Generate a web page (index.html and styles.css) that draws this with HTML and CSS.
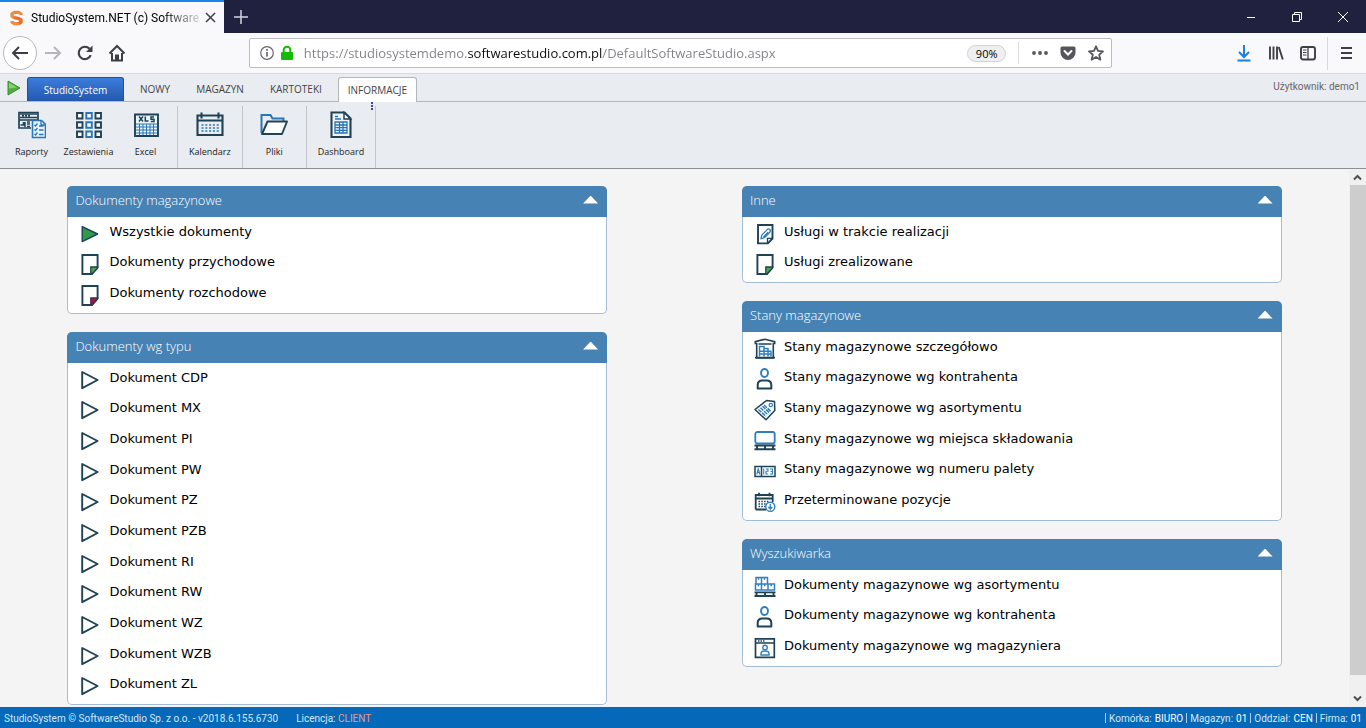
FILE: index.html
```
<!DOCTYPE html>
<html lang="pl">
<head>
<meta charset="utf-8">
<meta name="viewport" content="width=device-width, initial-scale=1">
<title>StudioSystem.NET (c) SoftwareStudio</title>
<link rel="stylesheet" href="styles.css">
</head>
<body>
<svg class="sprite" aria-hidden="true">
  <symbol id="i-play" viewBox="0 0 22 22"><path d="M3.2 3v16.2L18.6 11z" fill="#fff" stroke="#1f4257" stroke-width="1.9" stroke-linejoin="round"/></symbol>
  <symbol id="i-play-green" viewBox="0 0 22 22"><path d="M3.2 3.6v15L18.6 11z" fill="#2f9a4c" stroke="#1f4257" stroke-width="1.4" stroke-linejoin="round"/></symbol>
  <symbol id="i-doc-green" viewBox="0 0 22 22"><path d="M3.4 2h15.200v12.500l-5.700 6.500h-9.500z" fill="#fff" stroke="#1f4257" stroke-width="1.9"/><path d="M11.800 21v-7h6.800v1l-5.700 6z" fill="#4ca44f" stroke="#1f4257" stroke-width="1.300"/></symbol>
  <symbol id="i-doc-red" viewBox="0 0 22 22"><path d="M3.400 2h15.200v12.500l-5.700 6.500h-9.500z" fill="#fff" stroke="#1f4257" stroke-width="1.900"/><path d="M11.800 21v-7h6.800v1l-5.700 6z" fill="#a5183f" stroke="#3c2f4b" stroke-width="1.300"/></symbol>
  <symbol id="i-doc-edit" viewBox="0 0 22 22"><path d="M4 2h14.500v13.500l-4.600 4.900H4z" fill="#fff" stroke="#1f4257" stroke-width="1.900"/><path d="M13.500 20v-4.700h4.600" fill="none" stroke="#1f4257" stroke-width="1.300"/><path d="M7 15.600l.8-3.600 5.600-5.600q1.300-1 2.400.1t.2 2.500L10.500 14.700z M9.500 14l4.600-4.700" fill="none" stroke="#2f7fc0" stroke-width="1.300"/></symbol>
  <symbol id="i-warehouse" viewBox="0 0 22 22"><path d="M2.700 20V5.500H1.300V3.600L11 1.200l9.700 2.400v1.900h-1.400V20zM4.500 6h13" fill="none" stroke="#1f4257" stroke-width="1.600"/><path d="M5.500 18.500v-10H10v10M5.500 13.300h12M10 10.600h4v8M17 13.300v5.200M5.500 16h12" fill="none" stroke="#2f7fc0" stroke-width="1.500"/><path d="M1 19.600h20" stroke="#1f4257" stroke-width="1.700"/></symbol>
  <symbol id="i-person" viewBox="0 0 22 22"><ellipse cx="10.500" cy="5" rx="3.500" ry="4" fill="none" stroke="#2f7fc0" stroke-width="1.900"/><path d="M3.700 20.500v-3.500q0-4.500 4.500-4.500h4.600q4.500 0 4.500 4.500v3.500z" fill="none" stroke="#1f4257" stroke-width="2" stroke-linejoin="round"/></symbol>
  <symbol id="i-tag" viewBox="0 0 22 22"><path d="M1 10.500L12.500 1.500 20.500 2.500 20.800 11.500 12 20.800z" fill="#fff" stroke="#1f4257" stroke-width="1.500" stroke-linejoin="round"/><circle cx="16.800" cy="6" r="1.700" fill="none" stroke="#2f7fc0" stroke-width="1.200"/><path d="M4.500 10.500l7.500 7M6.500 8.800l7.500 7M8.500 7.200l7.500 7M10 6l7 6.500" stroke="#2f7fc0" stroke-width="1.500" stroke-dasharray="4 1"/></symbol>
  <symbol id="i-pallet" viewBox="0 0 22 22"><rect x="1.300" y="2" width="19.400" height="11.500" rx="2" fill="none" stroke="#2f7fc0" stroke-width="1.800"/><path d="M.5 15.500h21M.5 19.300h21M3 15v5M11 15v5M19 15v5" stroke="#1f4257" stroke-width="1.900"/></symbol>
  <symbol id="i-number" viewBox="0 0 22 22"><path d="M1 6.500h20v10H1zM7.500 6.500v10" fill="none" stroke="#1f4257" stroke-width="1.500"/><path d="M2.800 14.500l1.500-6 1.500 6M3 12.500h2.500M9.700 8.500v6M11.700 9h2.300v2.300H12V14h2.300M16 9h2.500v5H16M16.500 11.500h2" fill="none" stroke="#2f7fc0" stroke-width="1.100"/></symbol>
  <symbol id="i-calendar-down" viewBox="0 0 22 22"><path d="M1.700 18.500V4h17v7M1.700 7.500h17M1.700 18.500H12M5 1.800v3.500M15.500 1.800v3.500" fill="none" stroke="#1f4257" stroke-width="1.800"/><path d="M4.500 10.500h11M4.500 13h8M4.500 15.500h7" stroke="#1f4257" stroke-width="1.400" stroke-dasharray="1.500 1.300"/><circle cx="16.300" cy="15.800" r="4.500" fill="#fff" stroke="#2f7fc0" stroke-width="1.400"/><path d="M16.300 13v5M14.300 16l2 2 2-2" fill="none" stroke="#2f7fc0" stroke-width="1.300"/></symbol>
  <symbol id="i-boxes" viewBox="0 0 22 22"><path d="M1.500 14V8h6v6zM7.500 14V8h6.500v6zM14 14V8h6.500v6zM2 8V1.500h5.500V8M7.500 8V1.500h6V8M4.500 1.500v2.300M10.500 1.500v2.300M4.500 8v2.300M10.700 8v2.300M17.200 8v2.300" fill="none" stroke="#2f7fc0" stroke-width="1.500"/><path d="M.5 16.400h21M.5 20h21M2.500 16v4.500M11 16v4.500M19.500 16v4.500" stroke="#1f4257" stroke-width="1.900"/></symbol>
  <symbol id="i-window-person" viewBox="0 0 22 22"><path d="M1.500 1.800h18.800v18.500H1.500zM1.500 6h18.800" fill="none" stroke="#1f4257" stroke-width="1.700"/><path d="M4 4h7" stroke="#1f4257" stroke-width="1.300" stroke-dasharray="1.500 1"/><circle cx="11" cy="10.500" r="2.300" fill="none" stroke="#2f7fc0" stroke-width="1.400"/><path d="M7 18v-1.500q0-2.500 4-2.500t4 2.500V18z" fill="none" stroke="#2f7fc0" stroke-width="1.400"/></symbol>
</svg>

<header class="titlebar">
  <div class="tab">
    <svg class="favicon" viewBox="0 0 13 16" aria-hidden="true"><path d="M11 5V3.800L8.700 2.300H4.300L2 3.800v2.500L4.300 7.600l4.400.9L11 9.800v2.400l-2.300 1.500H4.300L2 12.200V11" fill="none" stroke="#f18a3c" stroke-width="3.200" stroke-linejoin="round"/><path d="M4.300 7.600l4.400.9L11 9.800v2.400l-2.300 1.500" fill="none" stroke="#ea6a30" stroke-width="2.800"/></svg>
    <span class="tab-title">StudioSystem.NET (c) Software</span>
    <button class="tab-close" aria-label="Zamknij kartę"><svg width="11" height="11" viewBox="0 0 11 11"><path d="M1 1l9 9M10 1L1 10" stroke="#3e3e46" stroke-width="1.500"/></svg></button>
  </div>
  <button class="new-tab" aria-label="Nowa karta"><svg width="14" height="14" viewBox="0 0 14 14"><path d="M7 0v14M0 7h14" stroke="#d5d5df" stroke-width="1.500"/></svg></button>
  <div class="window-buttons">
    <button aria-label="Minimalizuj"><svg width="10" height="10" viewBox="0 0 10 10"><path d="M1 5.500h8" stroke="#fff"/></svg></button>
    <button aria-label="Przywróć"><svg width="10" height="10" viewBox="0 0 10 10"><path d="M.5 2.500h7v7h-7zM2.500 2.500v-2h7v7h-2" fill="none" stroke="#fff"/></svg></button>
    <button aria-label="Zamknij"><svg width="10" height="10" viewBox="0 0 10 10"><path d="M0 0l10 10M10 0L0 10" stroke="#fff"/></svg></button>
  </div>
</header>

<nav class="navbar" aria-label="Przeglądarka">
  <button class="nav-button back" aria-label="Wstecz"><svg width="18" height="18" viewBox="0 0 18 18"><path d="M17 9H2M8 3L2 9l6 6" fill="none" stroke="#3e3e46" stroke-width="2"/></svg></button>
  <button class="nav-button" aria-label="Dalej"><svg width="18" height="18" viewBox="0 0 18 18"><path d="M1 9h15M10 3l6 6-6 6" fill="none" stroke="#b5b5ba" stroke-width="2"/></svg></button>
  <button class="nav-button" aria-label="Odśwież"><svg width="18" height="18" viewBox="0 0 18 18"><path d="M14.700 11.200A6.200 6.200 0 1 1 13.500 4.800" fill="none" stroke="#3e3e46" stroke-width="2.200"/><path d="M16.500 1.500V8H10z" fill="#3e3e46"/></svg></button>
  <button class="nav-button" aria-label="Strona startowa"><svg width="18" height="18" viewBox="0 0 18 18"><path d="M1.500 9.500L9 2l7.500 7.500M4 9v7.500h10V9" fill="none" stroke="#3e3e46" stroke-width="2"/><path d="M7 16v-5.500h4V16z" fill="#3e3e46"/></svg></button>
  <span class="nav-space"></span>
  <div class="urlbar">
    <svg width="16" height="16" viewBox="0 0 16 16" aria-hidden="true"><circle cx="8" cy="8" r="6.300" fill="none" stroke="#66666c" stroke-width="1.200"/><path d="M8 7v4.500M8 4v1.700" stroke="#66666c" stroke-width="1.700"/></svg>
    <svg width="16" height="16" viewBox="0 0 16 16" aria-hidden="true"><rect x="2" y="7" width="12" height="8" rx="1" fill="#12bc00"/><path d="M4.700 8V5a3.300 3.300 0 0 1 6.600 0v3" fill="none" stroke="#12bc00" stroke-width="2"/></svg>
    <input class="url" type="text" aria-label="Adres" value="https://studiosystemdemo.softwarestudio.com.pl/DefaultSoftwareStudio.aspx">
    <button class="zoom">90%</button>
    <span class="url-divider"></span>
    <button class="url-button" aria-label="Więcej"><svg width="16" height="16" viewBox="0 0 16 16" fill="#55555c"><circle cx="2" cy="8" r="1.900"/><circle cx="8" cy="8" r="1.900"/><circle cx="14" cy="8" r="1.900"/></svg></button>
    <button class="url-button" aria-label="Pocket"><svg width="16" height="16" viewBox="0 0 16 16"><path d="M2 1.500h12q1.500 0 1.500 1.500v4.500a7.500 7.500 0 0 1-15 0V3Q.5 1.500 2 1.500z" fill="#55555c"/><path d="M4.500 6L8 9.500 11.500 6" fill="none" stroke="#fff" stroke-width="2" stroke-linecap="round"/></svg></button>
    <button class="url-button" aria-label="Zakładka"><svg width="16" height="16" viewBox="0 0 16 16"><path d="M8 1.300l2 4.600 5 .5-3.800 3.300 1.200 5L8 12l-4.400 2.700 1.200-5L1 6.400l5-.5z" fill="none" stroke="#55555c" stroke-width="1.800" stroke-linejoin="round"/></svg></button>
  </div>
  <span class="nav-space"></span>
  <button class="nav-button" aria-label="Pobrane"><svg width="16" height="18" viewBox="0 0 16 18"><path d="M8 1v12M3 8l5 5 5-5M1.500 16.500h13" fill="none" stroke="#1a7fe0" stroke-width="2"/></svg></button>
  <button class="nav-button" aria-label="Biblioteka"><svg width="16" height="16" viewBox="0 0 16 16"><path d="M2 1.500v13M5.500 1.500v13M9 1.500v13M10.800 2l4 12.500" stroke="#3e3e46" stroke-width="1.900"/></svg></button>
  <button class="nav-button" aria-label="Panel boczny"><svg width="16" height="16" viewBox="0 0 16 16"><rect x="1" y="2" width="14" height="12.500" rx="2" fill="none" stroke="#3e3e46" stroke-width="1.900"/><path d="M8 2v12.500" stroke="#3e3e46" stroke-width="1.300"/><path d="M3 5h3.500M3 7.500h3.500M3 10h3.500" stroke="#3e3e46"/></svg></button>
  <span class="menu-divider"></span>
  <button class="nav-button menu" aria-label="Menu"><svg width="14" height="14" viewBox="0 0 14 14"><path d="M1 2h11M1 7h11M1 12h11" stroke="#3e3e46" stroke-width="2"/></svg></button>
</nav>

<div class="ribbon-tabs">
  <svg class="start" width="14" height="16" viewBox="0 0 14 16" aria-hidden="true"><path d="M1 1v14L13 8z" fill="#4fae3e" stroke="#3d8f35" stroke-linejoin="round"/><path d="M2 2.500v6l8-1z" fill="#86d070"/></svg>
  <button class="ribbon-tab primary">StudioSystem</button>
  <button class="ribbon-tab">NOWY</button>
  <button class="ribbon-tab">MAGAZYN</button>
  <button class="ribbon-tab">KARTOTEKI</button>
  <button class="ribbon-tab active">INFORMACJE</button>
  <span class="user">Użytkownik: demo1</span>
</div>

<div class="ribbon">
  <div class="group">
    <button class="tool"><svg viewBox="0 0 28 28"><path d="M1 1.500h19V9H1zM1 9v8h12M20 9v1" fill="none" stroke="#1f4257" stroke-width="1.700"/><path d="M2 3h17M2 6.500h17" stroke="#1f4257" stroke-width="1.500"/><path d="M4 4.800h8" stroke="#1f4257" stroke-width="2" stroke-dasharray="2 1"/><path d="M2.500 14h3v-3M7 11v5M9 11h3M9 13h3M9 15.500h3" fill="none" stroke="#1f4257" stroke-width="1.500"/><path d="M14.500 9.500h9l4 4v13h-13z" fill="#e9f1fb" stroke="#2876b8" stroke-width="1.600"/><path d="M23 9.500v4.500h4.500M16.500 14l1 1 2-2.500M16.500 18.500l1 1 2-2.500M16.500 23l1 1 2-2.500M21 15h4.500M21 19h4.500M21 23.500h4.500" fill="none" stroke="#2876b8" stroke-width="1.300"/></svg>Raporty</button>
    <button class="tool"><svg viewBox="0 0 28 28" fill="#fff" stroke-width="1.900"><g stroke="#1f4257"><path d="M2 2h5.500v5.500H2zM2 11.300h5.500v5.500H2zM2 20.500h5.500V26H2zM20.500 2H26v5.500h-5.500zM20.500 11.300H26v5.500h-5.500zM20.500 20.500H26V26h-5.500z"/></g><g stroke="#2876b8"><path d="M11.300 2h5.500v5.500h-5.500zM11.300 11.300h5.500v5.500h-5.500zM11.300 20.500h5.500V26h-5.500z"/></g></svg>Zestawienia</button>
    <button class="tool"><svg viewBox="0 0 28 28"><path d="M3 3.500h23v21.500H3z" fill="#edf4fb" stroke="#1f4257" stroke-width="1.900"/><path d="M7 5.500l4 5M11 5.500l-4 5M13.300 5.500v4.500h3.200M22 6h-3v2.200h3v2.200h-3.200" fill="none" stroke="#1f4257" stroke-width="1.500"/><path d="M4 13h21M4 16h21M4 19h21M4 22h21M7.500 13v11M11 13v11M14.500 13v11M18 13v11M21.500 13v11" stroke="#2876b8"/></svg>Excel</button>
  </div>
  <div class="group single">
    <button class="tool"><svg viewBox="0 0 28 28"><path d="M1.500 4.500h25V24h-25zM1.500 9.500h25M5.500 1.500v6M22.500 1.500v6" fill="none" stroke="#1f4257" stroke-width="2.100"/><path d="M5.500 14h18M5.500 17h18M5.500 20h18" stroke="#2876b8" stroke-width="1.700" stroke-dasharray="2 1.800"/></svg>Kalendarz</button>
  </div>
  <div class="group single">
    <button class="tool"><svg viewBox="0 0 28 28"><path d="M1.500 22V4h9l2 3.500h11V11" fill="none" stroke="#2876b8" stroke-width="2"/><path d="M2 23L7.500 10.500h19.500L22 23z" fill="#fff" stroke="#1f4257" stroke-width="1.900" stroke-linejoin="round"/></svg>Pliki</button>
  </div>
  <div class="group single">
    <button class="tool"><svg viewBox="0 0 28 28"><path d="M4.500 1.500h13l6 6V26h-19z" fill="#f0f5fb" stroke="#1f4257" stroke-width="2.100"/><path d="M17 1.500V8h6.500z" fill="#fff" stroke="#1f4257" stroke-width="1.500"/><path d="M8 5.500h3M8 8h6M8 11h12v11H8zM8 14h12M8 16.700h12M8 19.300h12M12.500 11v11M16 11v11" fill="none" stroke="#2876b8" stroke-width="1.300"/></svg>Dashboard</button>
  </div>
</div>

<div class="workspace">
  <main class="columns">
    <div class="column">
      <section class="panel">
        <h2>Dokumenty magazynowe<button aria-label="Zwiń"></button></h2>
        <ul>
          <li><a href="#"><svg><use href="#i-play-green"/></svg>Wszystkie dokumenty</a></li>
          <li><a href="#"><svg><use href="#i-doc-green"/></svg>Dokumenty przychodowe</a></li>
          <li><a href="#"><svg><use href="#i-doc-red"/></svg>Dokumenty rozchodowe</a></li>
        </ul>
      </section>
      <section class="panel">
        <h2>Dokumenty wg typu<button aria-label="Zwiń"></button></h2>
        <ul>
          <li><a href="#"><svg><use href="#i-play"/></svg>Dokument CDP</a></li>
          <li><a href="#"><svg><use href="#i-play"/></svg>Dokument MX</a></li>
          <li><a href="#"><svg><use href="#i-play"/></svg>Dokument PI</a></li>
          <li><a href="#"><svg><use href="#i-play"/></svg>Dokument PW</a></li>
          <li><a href="#"><svg><use href="#i-play"/></svg>Dokument PZ</a></li>
          <li><a href="#"><svg><use href="#i-play"/></svg>Dokument PZB</a></li>
          <li><a href="#"><svg><use href="#i-play"/></svg>Dokument RI</a></li>
          <li><a href="#"><svg><use href="#i-play"/></svg>Dokument RW</a></li>
          <li><a href="#"><svg><use href="#i-play"/></svg>Dokument WZ</a></li>
          <li><a href="#"><svg><use href="#i-play"/></svg>Dokument WZB</a></li>
          <li><a href="#"><svg><use href="#i-play"/></svg>Dokument ZL</a></li>
        </ul>
      </section>
    </div>
    <div class="column">
      <section class="panel">
        <h2>Inne<button aria-label="Zwiń"></button></h2>
        <ul>
          <li><a href="#"><svg><use href="#i-doc-edit"/></svg>Usługi w trakcie realizacji</a></li>
          <li><a href="#"><svg><use href="#i-doc-green"/></svg>Usługi zrealizowane</a></li>
        </ul>
      </section>
      <section class="panel">
        <h2>Stany magazynowe<button aria-label="Zwiń"></button></h2>
        <ul>
          <li><a href="#"><svg><use href="#i-warehouse"/></svg>Stany magazynowe szczegółowo</a></li>
          <li><a href="#"><svg><use href="#i-person"/></svg>Stany magazynowe wg kontrahenta</a></li>
          <li><a href="#"><svg><use href="#i-tag"/></svg>Stany magazynowe wg asortymentu</a></li>
          <li><a href="#"><svg><use href="#i-pallet"/></svg>Stany magazynowe wg miejsca składowania</a></li>
          <li><a href="#"><svg><use href="#i-number"/></svg>Stany magazynowe wg numeru palety</a></li>
          <li><a href="#"><svg><use href="#i-calendar-down"/></svg>Przeterminowane pozycje</a></li>
        </ul>
      </section>
      <section class="panel">
        <h2>Wyszukiwarka<button aria-label="Zwiń"></button></h2>
        <ul>
          <li><a href="#"><svg><use href="#i-boxes"/></svg>Dokumenty magazynowe wg asortymentu</a></li>
          <li><a href="#"><svg><use href="#i-person"/></svg>Dokumenty magazynowe wg kontrahenta</a></li>
          <li><a href="#"><svg><use href="#i-window-person"/></svg>Dokumenty magazynowe wg magazyniera</a></li>
        </ul>
      </section>
    </div>
  </main>
  <div class="scrollbar" aria-hidden="true">
    <svg width="17" height="16" viewBox="0 0 17 16"><path d="M5 10.500L8.500 7l3.500 3.500" fill="none" stroke="#505050" stroke-width="2"/></svg>
    <span class="thumb"></span>
    <svg class="down" width="17" height="16" viewBox="0 0 17 16"><path d="M5 5.500L8.500 9 12 5.500" fill="none" stroke="#505050" stroke-width="2"/></svg>
  </div>
</div>

<footer class="statusbar">
  <span>StudioSystem © SoftwareStudio Sp. z o.o. - v2018.6.155.6730</span>
  <span>Licencja: <span class="license">CLIENT</span></span>
  <ul class="context">
    <li>Komórka: <b>BIURO</b></li>
    <li>Magazyn: <b>01</b></li>
    <li>Oddział: <b>CEN</b></li>
    <li>Firma: <b>01</b></li>
  </ul>
</footer>
</body>
</html>
```
FILE: styles.css
```
* { box-sizing: border-box; }
body {
  margin: 0;
  min-height: 100vh;
  display: flex;
  flex-direction: column;
  background: #f4f4f4;
  font-family: "Open Sans", "Noto Sans", sans-serif;
  font-size: 10px;
  color: #000;
}
button {
  border: 0;
  padding: 0;
  background: none;
  font: inherit;
  color: inherit;
}
svg { display: block; flex: none; }
ul { list-style: none; margin: 0; padding: 0; }
.sprite { position: absolute; width: 0; height: 0; }

/* Browser title bar */
.titlebar { display: flex; height: 33px; background: #20213e; }
.tab {
  width: 224px;
  display: flex;
  align-items: center;
  padding: 0 11px 0 10px;
  border-top: 2px solid #1a84e8;
  background: #f9f9fb;
}
.favicon { width: 13px; height: 16px; margin-right: 8px; }
.tab-title {
  flex: 1;
  white-space: nowrap;
  font-family: Roboto, "Open Sans", sans-serif;
  font-size: 12px;
  mask-image: linear-gradient(to right, #000 130px, transparent 175px);
}
.tab-close { display: flex; margin-left: 6px; }
.new-tab { width: 34px; display: grid; place-items: center; }
.window-buttons { display: flex; margin-left: auto; }
.window-buttons button { width: 46px; display: grid; place-items: center; }

/* Browser navigation */
.navbar {
  display: flex;
  align-items: center;
  height: 41px;
  padding: 0 3px 0 4px;
  background: #f9f9fb;
  border-bottom: 1px solid #d8dade;
}
.nav-button { width: 32px; height: 34px; display: grid; place-items: center; flex: none; }
.back { border: 1px solid #b9b9bd; border-radius: 50%; background: #fff; height: 34px; width: 34px; margin-left: -1px; }
.nav-space { flex: 3; }
.urlbar {
  flex: 22;
  min-width: 0;
  height: 30px;
  display: flex;
  align-items: center;
  gap: 4px;
  padding: 0 3px 0 9px;
  border: 1px solid #b9bdc0;
  border-radius: 2px;
  background: #fff;
}
.url {
  flex: 1;
  min-width: 0;
  height: 28px;
  margin-left: 5px;
  padding: 0;
  border: 0;
  outline: 0;
  font: 13px/28px "Open Sans", "Noto Sans", sans-serif;
  color: transparent;
  background: linear-gradient(to right, #808087 164px, #0c0c0d 164px, #0c0c0d 298px, #808087 298px);
  background-clip: text;
}
.zoom {
  width: 39px;
  height: 17px;
  border: 1px solid #d3d3d6;
  border-radius: 9px;
  background: #efeff1;
  font-size: 11px;
  line-height: 15px;
  text-align: center;
}
.url-divider { width: 1px; height: 22px; margin: 0 5px 0 8px; background: #dcdcdf; }
.url-button { width: 24px; height: 24px; display: grid; place-items: center; }
.menu-divider { width: 1px; height: 33px; margin: 0 3px; background: #d8d8dc; }

/* Ribbon */
.ribbon-tabs {
  display: flex;
  align-items: flex-end;
  gap: 6px;
  height: 28px;
  padding: 0 6px 0 7px;
  background: #e9ecf1;
  border-bottom: 1px solid #b3b7bc;
}
.start { align-self: center; }
.ribbon-tab { height: 24px; padding: 0 10px; line-height: 24px; color: #444; white-space: nowrap; }
.ribbon-tab.primary {
  width: 97px;
  border: 1px solid #1f4f9f;
  border-bottom: 0;
  border-radius: 3px 3px 0 0;
  background: linear-gradient(#3c7cdb, #2458ae);
  color: #fff;
  line-height: 22px;
}
.ribbon-tab.active {
  position: relative;
  height: 25px;
  margin-bottom: -1px;
  padding: 0 9px;
  border: 1px solid #b3b7bc;
  border-bottom: 0;
  border-radius: 3px 3px 0 0;
  background: #fff;
  line-height: 23px;
}
.ribbon-tab.active::after {
  content: "";
  position: absolute;
  top: 100%;
  right: 43px;
  height: 8px;
  border-right: 2px dotted #4a3fa8;
}
.user { margin: 0 0 0 auto; line-height: 28px; color: #666; font-family: Roboto, "Open Sans", sans-serif; }
.ribbon {
  display: flex;
  height: 67px;
  padding-top: 4px;
  background: #e9ecf1;
  border-bottom: 1px solid #8b8e93;
}
.group { display: flex; padding: 0 3px; border-right: 1px solid #c3c7cd; }
.tool {
  min-width: 57px;
  display: flex;
  flex-direction: column;
  align-items: center;
  padding: 5px 0 0;
  font-size: 9px;
  line-height: 14px;
  color: #222;
}
.single .tool { padding: 5px 8px 0; }
.tool svg { width: 28px; height: 28px; margin-bottom: 6px; }

/* Content */
.workspace { flex: 1; display: flex; }
.columns { flex: 1; display: grid; grid-template-columns: 1fr 1fr; align-items: start; padding: 17px 0 2px; }
.column { display: flex; flex-direction: column; gap: 18px; padding: 0 10%; }
.panel { border: 1px solid #a3bdd6; border-top: 0; border-radius: 5px; background: #fff; padding-bottom: 4px; }
.panel h2 {
  display: flex;
  justify-content: space-between;
  align-items: center;
  height: 31px;
  margin: 0 -1px;
  padding: 0 9px 4px 8px;
  border-radius: 5px 5px 0 0;
  background: #4682b4;
  color: #fff;
  font-size: 13px;
  font-weight: 300;
}
.panel h2 button {
  width: 15px;
  height: 8px;
  background: #fff;
  clip-path: polygon(50% 0, 100% 100%, 0 100%);
}
.panel a {
  display: flex;
  gap: 8px;
  height: 31px;
  padding-left: 11px;
  color: #000;
  text-decoration: none;
  font: 13px/30px "DejaVu Sans", Verdana, sans-serif;
}
.panel li:nth-child(3n+1) a { height: 30px; }
.panel a svg { width: 22px; height: 22px; margin-top: 6px; }

.scrollbar { width: 17px; display: flex; flex-direction: column; background: #f0f0f0; }
.thumb { flex: 1; margin: 0 0 16px 1px; background: #cdcdcd; }

/* Status bar */
.statusbar {
  display: flex;
  gap: 18px;
  height: 21px;
  padding: 0 4px;
  background: #0568b8;
  color: #d3e8f8;
  font-family: Roboto, "Open Sans", sans-serif;
  line-height: 24px;
  white-space: nowrap;
}
.license { color: #e0a184; }
.context { display: flex; gap: 3px; margin-left: auto; }
.context li { display: flex; gap: 3px; }
.context li::before { content: ""; height: 10px; margin-top: 6px; border-left: 1px solid #a9d0ee; }
.context b { font-weight: 400; color: #fff; }
```
